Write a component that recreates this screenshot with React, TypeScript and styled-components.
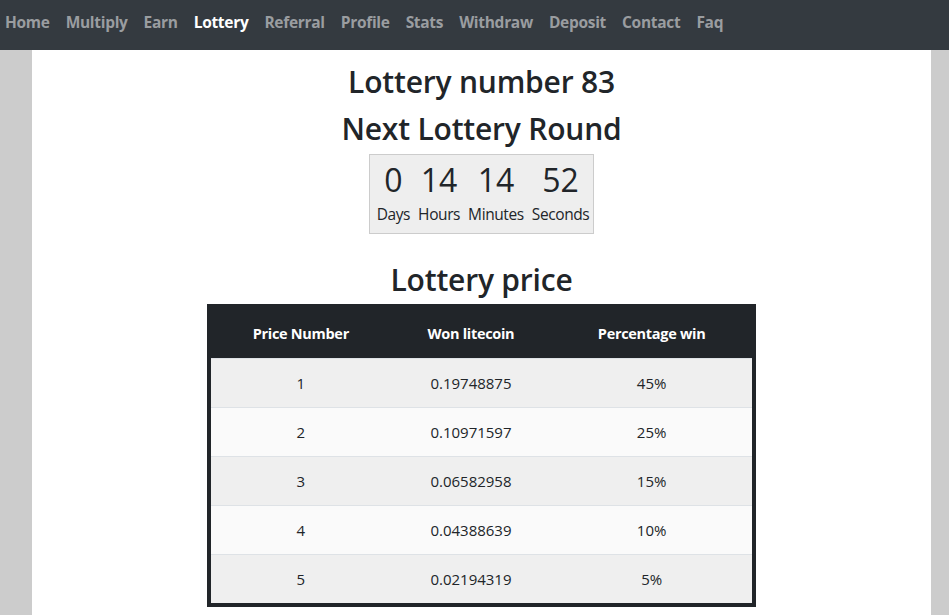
import React from "react";
import styled, { createGlobalStyle } from "styled-components";

const GlobalStyle = createGlobalStyle`
  body {
    margin: 0;
    background-color: #cccccc;
    font-family: "Open Sans", "Noto Sans", sans-serif;
    color: #212529;
  }
`;

const NavBar = styled.nav`
  display: flex;
  align-items: center;
  height: 50px;
  padding: 0 5px 6px;
  box-sizing: border-box;
  gap: 16px;
  background-color: #343a40;
`;

const NavLink = styled.a<{ $active?: boolean }>`
  font-size: 15.5px;
  font-weight: 700;
  letter-spacing: -0.3px;
  color: ${(props) => (props.$active ? "#ffffff" : "#9a9da0")};
  text-decoration: none;
  cursor: pointer;
`;

const Page = styled.main`
  display: flex;
  flex-direction: column;
  align-items: center;
  width: 899px;
  margin-left: 32px;
  min-height: 565px;
  background-color: #ffffff;
`;

const Heading = styled.h2<{ $top: number }>`
  margin: ${(props) => props.$top}px 0 0;
  font-size: 30px;
  font-weight: 600;
  line-height: 47px;
  letter-spacing: -0.2px;
`;

const Countdown = styled.div`
  display: flex;
  gap: 8px;
  margin-top: 2px;
  padding: 3px 4px 6px 7px;
  background-color: #eeeeee;
  border: 1px solid #cccccc;
`;

const Unit = styled.div`
  display: flex;
  flex-direction: column;
  align-items: center;
`;

const UnitValue = styled.span`
  font-size: 32px;
  line-height: 44px;
`;

const UnitLabel = styled.span`
  font-size: 15.5px;
  line-height: 25px;
  letter-spacing: -0.4px;
`;

const PriceTable = styled.table`
  width: 549px;
  margin-top: 1px;
  border-collapse: collapse;
  border: 4px solid #212529;
  font-size: 15px;

  th {
    height: 50px;
    padding: 0;
    background-color: #212529;
    color: #ffffff;
    font-size: 14.5px;
    font-weight: 700;
    letter-spacing: -0.3px;
  }

  td {
    height: 48px;
    padding: 0;
    text-align: center;
    border-top: 1px solid #dee2e6;
  }

  tbody tr:nth-child(odd) {
    background-color: #efefef;
  }

  tbody tr:nth-child(even) {
    background-color: #fafafa;
  }
`;

const navItems = [
  "Home",
  "Multiply",
  "Earn",
  "Lottery",
  "Referral",
  "Profile",
  "Stats",
  "Withdraw",
  "Deposit",
  "Contact",
  "Faq",
];

const countdown = [
  { value: "0", label: "Days" },
  { value: "14", label: "Hours" },
  { value: "14", label: "Minutes" },
  { value: "52", label: "Seconds" },
];

const prices = [
  { id: 1, won: "0.19748875", pct: "45%" },
  { id: 2, won: "0.10971597", pct: "25%" },
  { id: 3, won: "0.06582958", pct: "15%" },
  { id: 4, won: "0.04388639", pct: "10%" },
  { id: 5, won: "0.02194319", pct: "5%" },
];

const App: React.FC = () => {
  return (
    <>
      <GlobalStyle />
      <NavBar>
        {navItems.map((it) => (
          <NavLink key={it} $active={it === "Lottery"}>
            {it}
          </NavLink>
        ))}
      </NavBar>
      <Page>
        <Heading $top={8}>Lottery number 83</Heading>
        <Heading $top={0}>Next Lottery Round</Heading>
        <Countdown>
          {countdown.map((it) => (
            <Unit key={it.label}>
              <UnitValue>{it.value}</UnitValue>
              <UnitLabel>{it.label}</UnitLabel>
            </Unit>
          ))}
        </Countdown>
        <Heading $top={22}>Lottery price</Heading>
        <PriceTable>
          <thead>
            <tr>
              <th>Price Number</th>
              <th>Won litecoin</th>
              <th>Percentage win</th>
            </tr>
          </thead>
          <tbody>
            {prices.map((it) => (
              <tr key={it.id}>
                <td>{it.id}</td>
                <td>{it.won}</td>
                <td>{it.pct}</td>
              </tr>
            ))}
          </tbody>
        </PriceTable>
      </Page>
    </>
  );
};

export default App;
